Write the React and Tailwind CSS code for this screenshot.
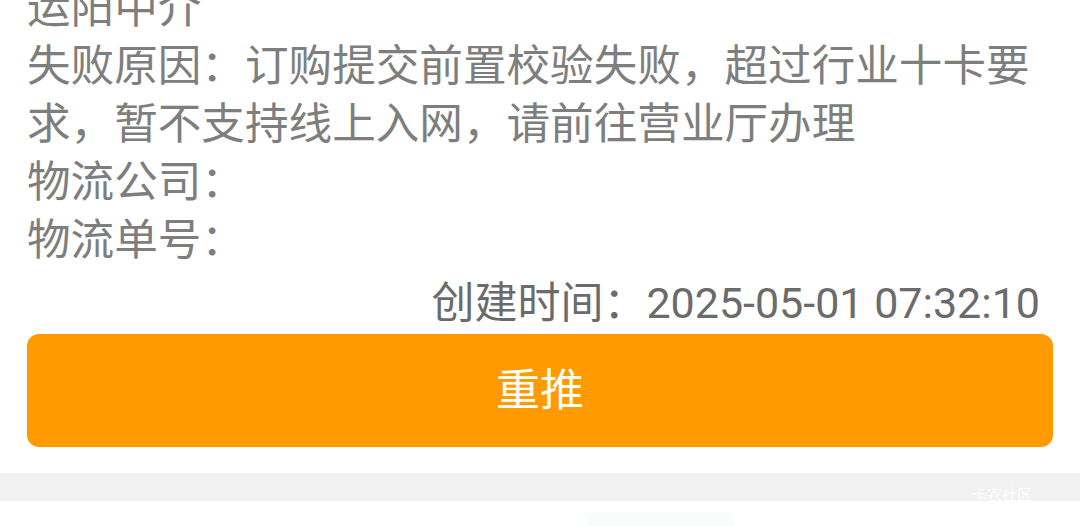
import React from 'react';

const lines = [
  '运阳中介',
  '失败原因：订购提交前置校验失败，超过行业十卡要',
  '求，暂不支持线上入网，请前往营业厅办理',
  '物流公司：',
  '物流单号：',
];

export default function App() {
  return (
    <div
      className="w-[1080px] h-[526px] overflow-hidden bg-white"
      style={{ fontFamily: 'Roboto, "Noto Sans CJK SC", sans-serif' }}
    >
      <div className="px-[27px] -mt-[20px]">
        {lines.map((t, i) => (
          <div key={i} className="text-[43.6px] leading-[58px] text-[#7e7e7e] whitespace-nowrap">
            {t}
          </div>
        ))}
        <div className="flex justify-end pr-[13px] text-[43px] leading-[58px] text-[#6b6b6b] mt-[4px]">
          创建时间：2025-05-01 07:32:10
        </div>
        <button
          type="button"
          className="mt-[2px] w-full h-[113px] rounded-[12px] bg-[#ff9a00] text-white text-[44px] flex items-center justify-center"
        >
          重推
        </button>
      </div>
      <div className="mt-[26px] h-[28px] bg-[#f2f2f2] relative">
        <span className="absolute right-[48px] top-[11px] text-[15px] text-white/80">卡农社区</span>
      </div>
      <div className="relative h-[26px]">
        <div className="absolute left-[588px] top-[12px] w-[145px] h-[16px] bg-[#f8fcfb]" />
      </div>
    </div>
  );
}
